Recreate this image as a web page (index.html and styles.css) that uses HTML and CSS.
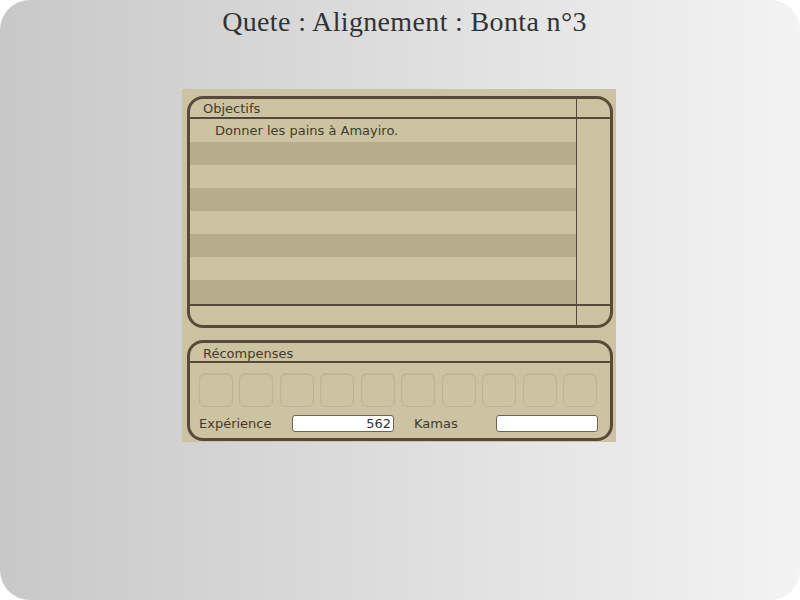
FILE: index.html
```html
<!DOCTYPE html>
<html lang="fr">
<head>
<meta charset="utf-8">
<title>Quete</title>
<link rel="stylesheet" href="styles.css">
</head>
<body>
<div class="window">
  <div class="title">Quete : Alignement : Bonta n°3</div>
  <div class="panel">
    <div class="frame objectives">
      <div class="h-main">Objectifs</div>
      <div class="h-side"></div>
      <div class="rows">
        <div class="row">Donner les pains à Amayiro.</div>
        <div class="row alt"></div>
        <div class="row"></div>
        <div class="row alt"></div>
        <div class="row"></div>
        <div class="row alt"></div>
        <div class="row"></div>
        <div class="row alt last"></div>
      </div>
      <div class="side"></div>
      <div class="f-main"></div>
      <div class="f-side"></div>
    </div>
    <div class="frame rewards">
      <div class="r-head">Récompenses</div>
      <div class="slots">
        <div class="slot"></div><div class="slot"></div><div class="slot"></div><div class="slot"></div><div class="slot"></div>
        <div class="slot"></div><div class="slot"></div><div class="slot"></div><div class="slot"></div><div class="slot"></div>
      </div>
      <div class="values">
        <span class="label xp-label">Expérience</span>
        <span class="field">562</span>
        <span class="label kamas-label">Kamas</span>
        <span class="field"></span>
      </div>
    </div>
  </div>
</div>
</body>
</html>
```

FILE: styles.css
```css
html, body {
  margin: 0;
  padding: 0;
  background: #ffffff;
}

.window {
  width: 800px;
  height: 600px;
  border-radius: 30px;
  background: linear-gradient(to right, #c8c8c8, #f3f3f3);
  overflow: hidden;
}

.title {
  height: 89px;
  box-sizing: border-box;
  padding-top: 4px;
  padding-left: 9px;
  text-align: center;
  font-family: "Liberation Serif", "DejaVu Serif", serif;
  font-size: 28px;
  letter-spacing: 0.35px;
  line-height: 36px;
  color: #333333;
}

.panel {
  margin-left: 182px;
  width: 434px;
  height: 353px;
  box-sizing: border-box;
  padding: 7px 3px 1px 5px;
  background: #cbc3a1;
  display: flex;
  flex-direction: column;
  gap: 12px;
  font-family: "DejaVu Sans", "Liberation Sans", sans-serif;
  font-size: 13px;
  color: #453a2b;
}

.frame {
  border: 3px solid #574a3a;
  border-radius: 16px;
  box-sizing: border-box;
  overflow: hidden;
}

.objectives {
  height: 232px;
  display: grid;
  grid-template-columns: 386px 34px;
  grid-template-rows: 20px 185px 21px;
}

.h-main {
  border-bottom: 2px solid #574a3a;
  padding-left: 13px;
  line-height: 20px;
}

.h-side {
  border-left: 1px solid #574a3a;
  border-bottom: 2px solid #574a3a;
}

.rows {
  display: flex;
  flex-direction: column;
}

.row {
  height: 23px;
  line-height: 24px;
  padding-left: 25px;
  flex: none;
}

.row.alt {
  background: #b5ad8c;
}

.row.last {
  flex: 1;
}

.side {
  border-left: 1px solid #574a3a;
}

.f-main {
  border-top: 2px solid #574a3a;
}

.f-side {
  border-left: 1px solid #574a3a;
  border-top: 2px solid #574a3a;
}

.rewards {
  height: 101px;
}

.r-head {
  height: 18px;
  line-height: 21px;
  padding-left: 13px;
  border-bottom: 2px solid #574a3a;
}

.slots {
  margin: 10px 0 0 9px;
  width: 398px;
  display: grid;
  grid-template-columns: repeat(10, 1fr);
  gap: 6.4px;
}

.slot {
  height: 34px;
  box-sizing: border-box;
  border: 1px solid #bdb492;
  border-radius: 6px;
  box-shadow: inset 0 1px 1px rgba(120, 105, 70, 0.15);
}

.values {
  margin: 8px 0 0 9px;
  display: flex;
  align-items: center;
  height: 17px;
}

.label {
  line-height: 17px;
}

.xp-label {
  width: 93px;
}

.kamas-label {
  width: 82px;
  margin-left: 20px;
}

.field {
  width: 102px;
  height: 17px;
  box-sizing: border-box;
  background: #ffffff;
  border: 1px solid #6b6454;
  border-radius: 3px;
  text-align: right;
  padding-right: 2px;
  line-height: 15px;
  color: #333333;
}
```
